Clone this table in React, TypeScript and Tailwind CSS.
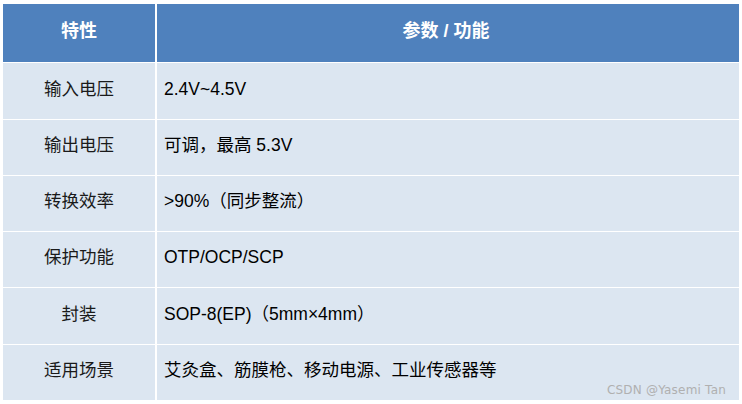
import { Fragment } from 'react';

const rows = [
  { name: '输入电压', value: '2.4V~4.5V', h: 'h-[56px]' },
  { name: '输出电压', value: '可调，最高 5.3V', h: 'h-[55px]' },
  { name: '转换效率', value: '>90%（同步整流）', h: 'h-[55px]' },
  { name: '保护功能', value: 'OTP/OCP/SCP', h: 'h-[55px]' },
  { name: '封装', value: 'SOP-8(EP)（5mm×4mm）', h: 'h-[56px]' },
  { name: '适用场景', value: '艾灸盒、筋膜枪、移动电源、工业传感器等', h: 'h-[55px]' },
];

export default function App() {
  return (
    <div
      className="relative w-[742px] h-[404px] bg-white pt-[4px] pl-[3px]"
      style={{ fontFamily: '"Liberation Sans", "Noto Sans CJK SC", sans-serif' }}
    >
      <div className="w-[736px] grid grid-cols-[152px_1fr] gap-x-[2px] gap-y-px bg-white">
        {/* Header */}
        <div className="h-[58px] bg-[#4f81bd] flex items-center justify-center pb-[3px] text-white font-bold text-[18px]">
          特性
        </div>
        <div className="h-[58px] bg-[#4f81bd] flex items-center justify-center pb-[3px] pr-[4px] text-white font-bold text-[18px]">
          参数 / 功能
        </div>

        {rows.map((r) => (
          <Fragment key={r.name}>
            <div
              className={`${r.h} bg-[#dce6f1] flex items-center justify-center pb-[4px] text-[17.5px] text-[#1a1a1a]`}
            >
              {r.name}
            </div>
            <div
              className={`${r.h} bg-[#dce6f1] flex items-center pl-[7px] pb-[4px] text-[17.5px] text-black`}
            >
              {r.value}
            </div>
          </Fragment>
        ))}
      </div>

      {/* Watermark */}
      <div
        className="absolute right-[16px] bottom-[5px] text-[12px] text-[#b0b0b0] tracking-[0.2px]"
        style={{ fontFamily: 'Tahoma, "DejaVu Sans", sans-serif' }}
      >
        CSDN @Yasemi Tan
      </div>
    </div>
  );
}
